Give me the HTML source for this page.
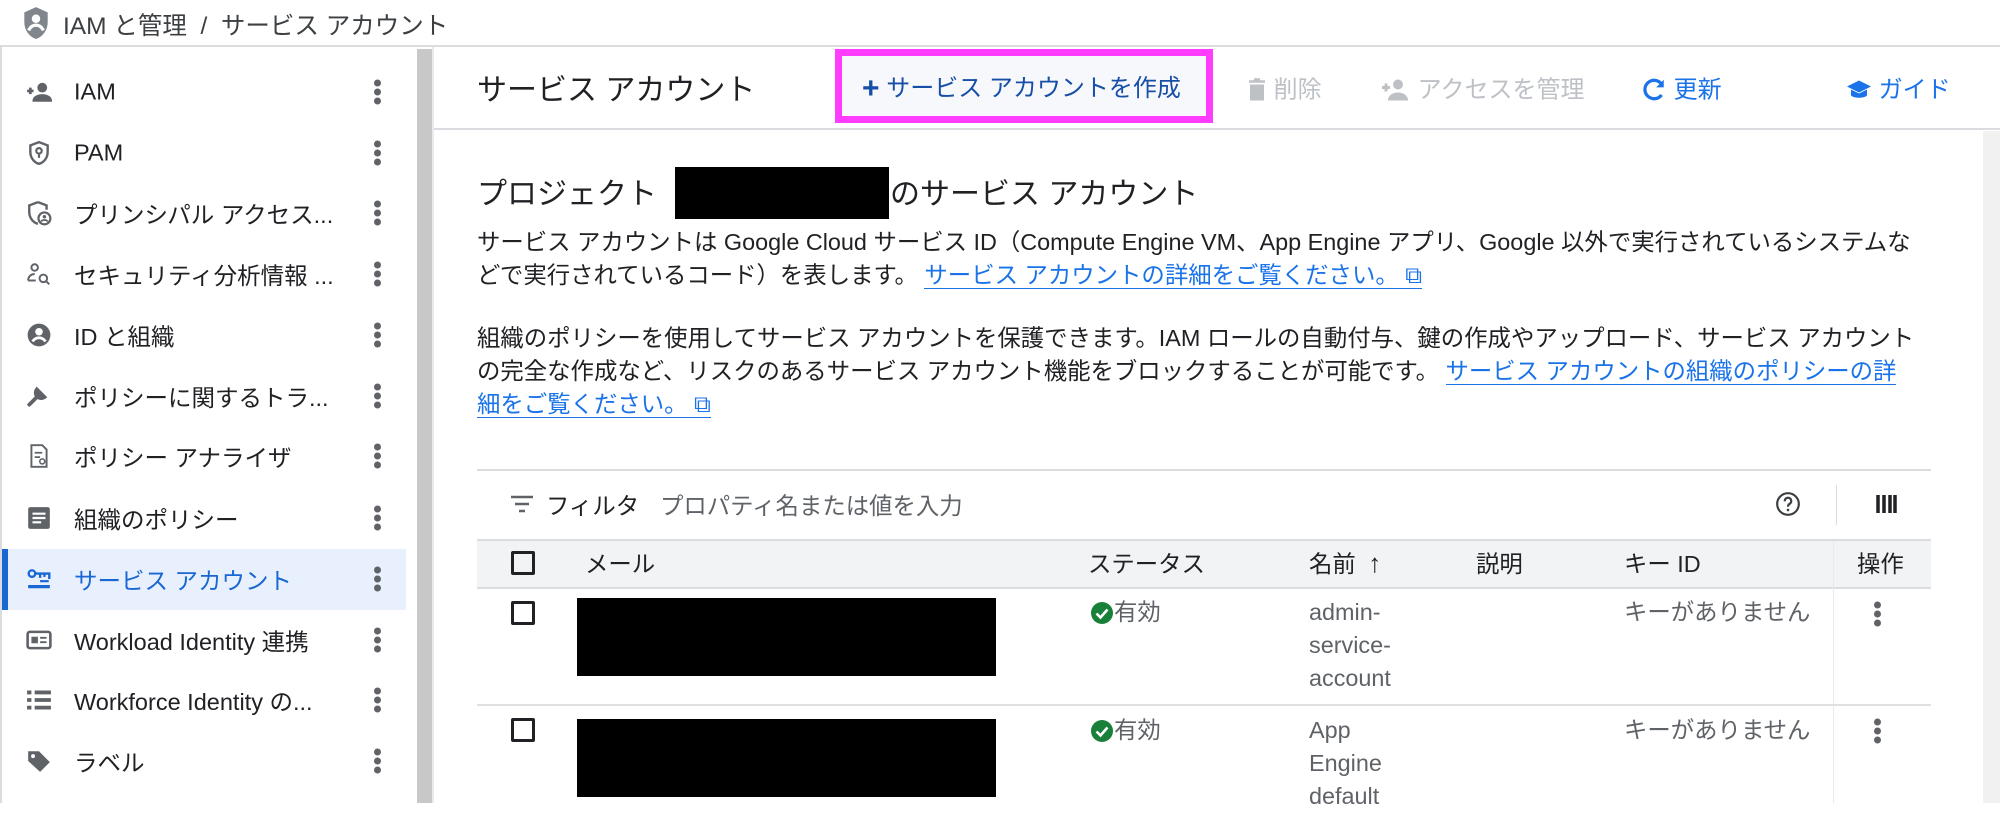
<!DOCTYPE html>
<html><head><meta charset="utf-8"><style>
*{margin:0;padding:0;box-sizing:border-box}
body{width:2000px;height:803px;overflow:hidden;background:#fff;font-family:"Liberation Sans","Noto Sans CJK JP",sans-serif;color:#202124;position:relative}
.a{position:absolute;white-space:nowrap}
.si{position:absolute;left:74px;font-size:23.5px;color:#202124;transform:translateY(-50%)}
.ic{position:absolute;left:26px;width:26px;height:26px;transform:translateY(-50%)}
.kb{position:absolute;left:374px;width:8px;transform:translateY(-50%)}
.kb i{display:block;width:7px;height:7px;border-radius:50%;background:#5f6368;margin:2px 0}
.tb{position:absolute;top:87px;transform:translateY(-50%);font-size:24px;white-space:nowrap}
.p{font-size:23.4px;line-height:33px;color:#202124}
.lk{color:#1a73e8;border-bottom:1px solid #1a73e8}
.cb{position:absolute;width:24px;height:24px;border:3px solid #202124;border-radius:2px}
.th{position:absolute;top:562px;transform:translateY(-50%);font-size:23.4px;white-space:nowrap}
.td{position:absolute;font-size:23.4px;color:#5f6368;white-space:nowrap;line-height:33px}
</style></head><body>
<!-- breadcrumb -->
<div class="a" style="left:0;top:0;width:2000px;height:47px;border-bottom:2px solid #dadce0"></div>
<svg class="a" style="left:22px;top:6px" width="28" height="34" viewBox="0 0 26 32"><path d="M13 1L2 6v9c0 8 5 14 11 16 6-2 11-8 11-16V6z" fill="#80868b"/><circle cx="13" cy="12" r="4" fill="#fff"/><path d="M6 23c2-4 5-5 7-5s5 1 7 5" stroke="#fff" stroke-width="3" fill="none"/></svg>
<div class="a" style="left:63px;top:7px;font-size:24.5px;color:#3c4043">IAM と管理 &nbsp;/ &nbsp;サービス アカウント</div>
<!-- sidebar -->
<div class="a" style="left:0;top:47px;width:2px;height:756px;background:#dadce0"></div>
<div class="a" style="left:417px;top:49px;width:15px;height:754px;background:#c8c8c8"></div>
<div class="a" style="left:432px;top:47px;width:2px;height:756px;background:#e8eaed"></div>
<div class="a" style="left:2px;top:549px;width:404px;height:61px;background:#e8f0fe"></div>
<div class="a" style="left:2px;top:549px;width:6px;height:61px;background:#1967d2"></div>

<svg class="ic" style="top:92px" viewBox="0 0 24 24"><path d="M1 11h6M4 8v6" stroke="#5f6368" stroke-width="2.5"/><circle cx="15" cy="8" r="4.5" fill="#5f6368"/><path d="M6 20c0-4 5-6 9-6s9 2 9 6v1H6z" fill="#5f6368"/></svg>
<div class="si" style="top:92px">IAM</div>
<svg class="ic" style="top:153px" viewBox="0 0 24 24"><path d="M12 2L4 5v6c0 6 4 10 8 11 4-1 8-5 8-11V5z" stroke="#5f6368" stroke-width="2.2" fill="none"/><circle cx="12" cy="10" r="2.5" stroke="#5f6368" stroke-width="2" fill="none"/><path d="M12 12.5v4" stroke="#5f6368" stroke-width="2"/></svg>
<div class="si" style="top:153px">PAM</div>
<svg class="ic" style="top:213px" viewBox="0 0 24 24"><path d="M11 2L3 5v6c0 6 4 10 8 11" stroke="#5f6368" stroke-width="2.2" fill="none"/><path d="M11 2l8 3v4" stroke="#5f6368" stroke-width="2.2" fill="none"/><circle cx="17" cy="17" r="5.5" stroke="#5f6368" stroke-width="2" fill="none"/><circle cx="17" cy="15.5" r="1.6" fill="#5f6368"/><path d="M14 20c1-2 5-2 6 0" stroke="#5f6368" stroke-width="1.6" fill="none"/></svg>
<div class="si" style="top:213px">プリンシパル アクセス...</div>
<svg class="ic" style="top:274px" viewBox="0 0 24 24"><circle cx="8" cy="6" r="3" stroke="#5f6368" stroke-width="1.8" fill="none"/><path d="M2 18c0-4 3-6 6-6" stroke="#5f6368" stroke-width="1.8" fill="none"/><path d="M2 18h7" stroke="#5f6368" stroke-width="1.8"/><circle cx="16" cy="16" r="3.5" stroke="#5f6368" stroke-width="1.8" fill="none"/><path d="M18.5 18.5l3 3" stroke="#5f6368" stroke-width="1.8"/></svg>
<div class="si" style="top:274px">セキュリティ分析情報 ...</div>
<svg class="ic" style="top:335px" viewBox="0 0 24 24"><circle cx="12" cy="12" r="10.5" fill="#5f6368"/><circle cx="12" cy="9" r="3.5" fill="#fff"/><path d="M6 18c2-3 4-3.5 6-3.5s4 .5 6 3.5" stroke="#fff" stroke-width="2.5" fill="none"/></svg>
<div class="si" style="top:335px">ID と組織</div>
<svg class="ic" style="top:396px" viewBox="0 0 24 24"><path d="M3 20l9-9M10 6a5 5 0 007 7l-3-3z" stroke="#5f6368" stroke-width="3.5" fill="#5f6368" stroke-linecap="round"/></svg>
<div class="si" style="top:396px">ポリシーに関するトラ...</div>
<svg class="ic" style="top:456px" viewBox="0 0 24 24"><path d="M5 2h10l4 4v16H5z" stroke="#5f6368" stroke-width="1.8" fill="none"/><path d="M8 9h7M8 13h5" stroke="#5f6368" stroke-width="1.6"/><circle cx="15" cy="17" r="2.3" stroke="#5f6368" stroke-width="1.5" fill="none"/></svg>
<div class="si" style="top:456px">ポリシー アナライザ</div>
<svg class="ic" style="top:518px" viewBox="0 0 24 24"><rect x="2" y="2" width="20" height="20" rx="2" fill="#5f6368"/><path d="M6 8h12M6 12h12M6 16h8" stroke="#fff" stroke-width="2"/></svg>
<div class="si" style="top:518px">組織のポリシー</div>
<svg class="ic" style="top:579px" viewBox="0 0 24 24"><circle cx="5.5" cy="7" r="3" stroke="#1967d2" stroke-width="2.2" fill="none"/><path d="M8.5 7h13v5M13 7v4M17 7v3" stroke="#1967d2" stroke-width="2.2" fill="none"/><path d="M2 19h20" stroke="#1967d2" stroke-width="3"/><path d="M13 14h8" stroke="#1967d2" stroke-width="2"/></svg>
<div class="si" style="top:579px;color:#1967d2">サービス アカウント</div>
<svg class="ic" style="top:640px" viewBox="0 0 24 24"><rect x="1.5" y="4.5" width="21" height="15" rx="2" stroke="#5f6368" stroke-width="2.4" fill="none"/><rect x="5" y="9" width="6" height="6" fill="#5f6368"/><path d="M13 10h6M13 14h6" stroke="#5f6368" stroke-width="1.8"/></svg>
<div class="si" style="top:640px">Workload Identity 連携</div>
<svg class="ic" style="top:700px" viewBox="0 0 24 24"><path d="M1 5h4M1 12h4M1 19h4M8 5h15M8 12h15M8 19h15" stroke="#5f6368" stroke-width="3.5"/></svg>
<div class="si" style="top:700px">Workforce Identity の...</div>
<svg class="ic" style="top:761px" viewBox="0 0 24 24"><path d="M2 3h10l10 10-9 9L2 12z" fill="#5f6368"/><circle cx="6.5" cy="7.5" r="1.8" fill="#fff"/></svg>
<div class="si" style="top:761px">ラベル</div>

<div class="kb" style="top:92px"><i></i><i></i><i></i></div>
<div class="kb" style="top:153px"><i></i><i></i><i></i></div>
<div class="kb" style="top:213px"><i></i><i></i><i></i></div>
<div class="kb" style="top:274px"><i></i><i></i><i></i></div>
<div class="kb" style="top:335px"><i></i><i></i><i></i></div>
<div class="kb" style="top:396px"><i></i><i></i><i></i></div>
<div class="kb" style="top:456px"><i></i><i></i><i></i></div>
<div class="kb" style="top:518px"><i></i><i></i><i></i></div>
<div class="kb" style="top:579px"><i></i><i></i><i></i></div>
<div class="kb" style="top:640px"><i></i><i></i><i></i></div>
<div class="kb" style="top:700px"><i></i><i></i><i></i></div>
<div class="kb" style="top:761px"><i></i><i></i><i></i></div>

<!-- toolbar -->
<div class="a" style="left:434px;top:128px;width:1566px;height:2px;background:#dadce0"></div>
<div class="a" style="left:477px;top:87px;transform:translateY(-50%);font-size:30px">サービス アカウント</div>
<div class="a" style="left:835px;top:49px;width:378px;height:74px;border:7px solid #ff3cff;background:#f6f8fc"></div>
<div class="tb" style="left:862px;color:#174ea6"><span style="font-size:30px;font-weight:bold;vertical-align:-2px">+</span> サービス アカウントを作成</div>
<div class="tb" style="left:1247px;color:#bdc1c6"><svg width="20" height="24" viewBox="0 0 20 24" style="vertical-align:-4px"><path d="M2 4h16M7 2h6" stroke="#bdc1c6" stroke-width="2.5"/><path d="M3 7h14v16H3z" fill="#bdc1c6"/></svg> 削除</div>
<div class="tb" style="left:1381px;color:#bdc1c6"><svg width="30" height="24" viewBox="0 0 30 24" style="vertical-align:-4px"><path d="M1 10h8M5 6v8" stroke="#bdc1c6" stroke-width="3"/><circle cx="17" cy="7" r="5" fill="#bdc1c6"/><path d="M7 23c0-6 6-8 10-8s10 2 10 8z" fill="#bdc1c6"/></svg> アクセスを管理</div>
<div class="tb" style="left:1641px;color:#1a73e8"><svg width="26" height="26" viewBox="0 0 24 24" style="vertical-align:-5px"><path d="M19 7a8.5 8.5 0 100 10" stroke="#1a73e8" stroke-width="3" fill="none"/><path d="M21 3v7h-7z" fill="#1a73e8"/></svg> 更新</div>
<div class="tb" style="left:1846px;color:#1a73e8"><svg width="26" height="24" viewBox="0 0 26 24" style="vertical-align:-4px"><path d="M13 3L1 9l12 6 12-6z" fill="#1a73e8"/><path d="M5 12v6c3 3 13 3 16 0v-6l-8 4z" fill="#1a73e8"/></svg> ガイド</div>
<div class="a" style="left:1983px;top:131px;width:17px;height:672px;background:#f1f1f1"></div>

<!-- content -->
<div class="a" style="left:477px;top:191px;transform:translateY(-50%);font-size:30px">プロジェクト</div>
<div class="a" style="left:675px;top:167px;width:214px;height:52px;background:#000"></div>
<div class="a" style="left:890px;top:191px;transform:translateY(-50%);font-size:30px">のサービス アカウント</div>
<div class="a p" style="left:477px;top:226px;white-space:normal;width:1460px">サービス アカウントは Google Cloud サービス ID（Compute Engine VM、App Engine アプリ、Google 以外で実行されているシステムな<br>どで実行されているコード）を表します。 <span class="lk">サービス アカウントの詳細をご覧ください。 ⧉</span></div>
<div class="a p" style="left:477px;top:322px;white-space:normal;width:1460px">組織のポリシーを使用してサービス アカウントを保護できます。IAM ロールの自動付与、鍵の作成やアップロード、サービス アカウント<br>の完全な作成など、リスクのあるサービス アカウント機能をブロックすることが可能です。 <span class="lk">サービス アカウントの組織のポリシーの詳</span><br><span class="lk">細をご覧ください。 ⧉</span></div>

<!-- table -->
<div class="a" style="left:477px;top:469px;width:1454px;height:2px;background:#dadce0"></div>
<svg class="a" style="left:510px;top:494px" width="24" height="20" viewBox="0 0 24 20"><path d="M1 3h22M5 10h14M9 17h6" stroke="#5f6368" stroke-width="2.6"/></svg>
<div class="a" style="left:546px;top:504px;transform:translateY(-50%);font-size:23.4px">フィルタ</div>
<div class="a" style="left:660px;top:504px;transform:translateY(-50%);font-size:23.4px;color:#5f6368">プロパティ名または値を入力</div>
<svg class="a" style="left:1775px;top:491px" width="26" height="26" viewBox="0 0 24 24"><circle cx="12" cy="12" r="10" stroke="#3c4043" stroke-width="2" fill="none"/><path d="M9 9.5a3 3 0 115 2c-1.3.8-2 1.3-2 3" stroke="#3c4043" stroke-width="2" fill="none"/><circle cx="12" cy="17.5" r="1.2" fill="#3c4043"/></svg>
<div class="a" style="left:1836px;top:485px;width:1px;height:40px;background:#dadce0"></div>
<svg class="a" style="left:1875px;top:494px" width="22" height="20" viewBox="0 0 22 20"><path d="M3 1v18M9 1v18M15 1v18M20 1v18" stroke="#202124" stroke-width="3.5"/></svg>

<div class="a" style="left:477px;top:539px;width:1454px;height:50px;background:#f1f3f4;border-top:2px solid #dadce0;border-bottom:2px solid #dadce0"></div>
<div class="cb" style="left:511px;top:551px"></div>
<div class="th" style="left:585px">メール</div>
<div class="th" style="left:1088px">ステータス</div>
<div class="th" style="left:1309px">名前 <span style="font-size:26px;font-weight:bold;margin-left:6px">↑</span></div>
<div class="th" style="left:1476px">説明</div>
<div class="th" style="left:1624px">キー ID</div>
<div class="th" style="left:1857px">操作</div>
<div class="a" style="left:1833px;top:541px;width:1px;height:262px;background:#e8eaed"></div>

<div class="cb" style="left:511px;top:601px"></div>
<div class="a" style="left:577px;top:598px;width:419px;height:78px;background:#000"></div>
<div class="td" style="left:1090px;top:596px;color:#5f6368"><svg width="24" height="24" viewBox="0 0 24 24" style="vertical-align:-5px"><circle cx="12" cy="12" r="11" fill="#188038"/><path d="M6.5 12.5l4 4 7-8" stroke="#fff" stroke-width="2.6" fill="none"/></svg>有効</div>
<div class="td" style="left:1309px;top:596px">admin-<br>service-<br>account</div>
<div class="td" style="left:1624px;top:596px">キーがありません</div>
<div class="kb" style="left:1874px;top:614px"><i></i><i></i><i></i></div>
<div class="a" style="left:477px;top:704px;width:1454px;height:2px;background:#e0e0e0"></div>

<div class="cb" style="left:511px;top:718px"></div>
<div class="a" style="left:577px;top:719px;width:419px;height:78px;background:#000"></div>
<div class="td" style="left:1090px;top:714px;color:#5f6368"><svg width="24" height="24" viewBox="0 0 24 24" style="vertical-align:-5px"><circle cx="12" cy="12" r="11" fill="#188038"/><path d="M6.5 12.5l4 4 7-8" stroke="#fff" stroke-width="2.6" fill="none"/></svg>有効</div>
<div class="td" style="left:1309px;top:714px">App<br>Engine<br>default</div>
<div class="td" style="left:1624px;top:714px">キーがありません</div>
<div class="kb" style="left:1874px;top:731px"><i></i><i></i><i></i></div>
</body></html>
